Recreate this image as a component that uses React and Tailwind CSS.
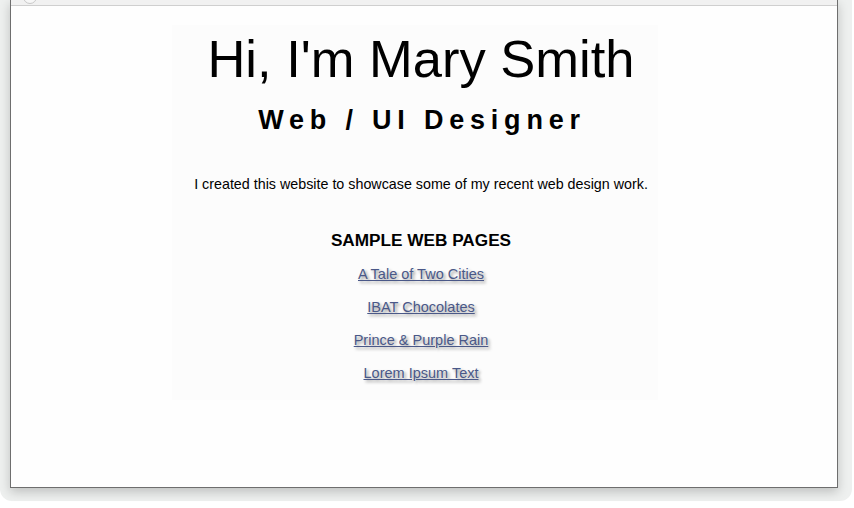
import React from 'react';

const links = ['A Tale of Two Cities', 'IBAT Chocolates', 'Prince & Purple Rain', 'Lorem Ipsum Text'];

export default function App() {
  return (
    <div className="w-[854px] h-[508px] bg-white overflow-hidden" style={{ fontFamily: '"Liberation Sans", Arial, sans-serif' }}>
      {/* browser chrome backdrop */}
      <div className="w-[852px] h-[501px] bg-[#eef0ef] rounded-b-[12px] pl-[10px] pr-[14px] pb-[13px]">
        <div className="relative h-full flex flex-col bg-[#fefefe] border-x border-b border-[#6e6e6e] shadow-[0_4px_10px_rgba(0,0,0,0.2)]">
          <div className="h-[6px] bg-[#f1f1f1] border-b border-[#cfcfcf] relative overflow-hidden">
            <div className="absolute left-[12px] -top-[10px] w-[14px] h-[14px] rounded-full border border-[#c8c8c8] bg-[#f7f7f7]"></div>
          </div>

          <div className="flex-1 pl-[161px] pt-[19px]">
            <div className="w-[486px] bg-[#fcfcfc] pl-[12px] pt-[8px] pb-[19px] flex flex-col items-center text-black">
              <h1 className="text-[52.5px] leading-none font-normal">Hi, I'm Mary Smith</h1>
              <h2 className="mt-[21px] text-[27px] leading-none font-bold tracking-[5.8px] pl-[2px]">Web / UI Designer</h2>
              <p className="mt-[43px] text-[14.3px] leading-none">I created this website to showcase some of my recent web design work.</p>
              <h3 className="mt-[41px] text-[17.2px] leading-none font-bold">SAMPLE WEB PAGES</h3>
              <ul className="mt-[18px] flex flex-col items-center gap-[18.5px]">
                {links.map((l) => (
                  <li key={l} className="text-[14.5px] leading-none">
                    <a href="#" className="text-[#4a5888] underline [text-shadow:2px_2px_3px_#969696]">{l}</a>
                  </li>
                ))}
              </ul>
            </div>
          </div>
        </div>
      </div>
    </div>
  );
}
